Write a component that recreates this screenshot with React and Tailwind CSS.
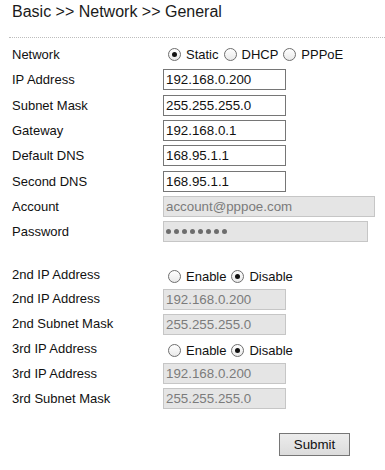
import React from "react";

function Radio({ checked }) {
    return (
        <span className="inline-flex h-[13px] w-[13px] shrink-0 items-center justify-center rounded-full border border-[#6e6e6e] bg-linear-to-b from-white to-[#e9e9e9]">
            {checked && <span className="h-[5px] w-[5px] rounded-full bg-[#111]" />}
        </span>
    );
}

function Choice({ label, checked }) {
    return (
        <label className="flex items-center">
            <span className="ml-[5px] mr-[5px] flex"><Radio checked={checked} /></span>
            <span>{label}</span>
        </label>
    );
}

function Row({ label, children, h }) {
    return (
        <div className={"flex items-center " + h}>
            <div className="w-[151px] shrink-0">{label}</div>
            <div className="flex items-center">{children}</div>
        </div>
    );
}

function Field({ value, w = "w-[123px]", off }) {
    return (
        <input
            readOnly
            defaultValue={value}
            className={
                "h-[21px] border px-[2px] text-[13.33px] outline-none " +
                w +
                (off
                    ? " border-[#c6c6c6] bg-[#e5e5e5] text-[#7b7b7b]"
                    : " border-[#767676] bg-white text-[#111]")
            }
        />
    );
}

const mainRows = [
    ["IP Address", "192.168.0.200"],
    ["Subnet Mask", "255.255.255.0"],
    ["Gateway", "192.168.0.1"],
    ["Default DNS", "168.95.1.1"],
    ["Second DNS", "168.95.1.1"],
];

function App() {
    const h1 = "h-[25.33px]";
    const h2 = "h-[24.8px]";
    return (
        <div className="min-h-[470px] w-[385px] bg-white font-['Liberation_Sans',Arial,sans-serif] text-[13px] text-[#111]">
            <div className="pl-[12px] pt-[3px] text-[16px] leading-[18px] text-[#1a1a1a]">Basic &gt;&gt; Network &gt;&gt; General</div>
            <div className="ml-[9px] mt-[16px] border-t border-dotted border-[#bdbdbd]" />

            <div className="pl-[12px] pt-[4px]">
                <Row label="Network" h={h1}>
                    <Choice label="Static" checked />
                    <Choice label="DHCP" />
                    <Choice label="PPPoE" />
                </Row>
                {mainRows.map(([label, value]) => (
                    <Row key={label} label={label} h={h1}>
                        <Field value={value} />
                    </Row>
                ))}
                <Row label="Account" h={h1}>
                    <Field value="account@pppoe.com" w="w-[212px]" off />
                </Row>
                <Row label="Password" h={h1}>
                    <div className="flex h-[21px] w-[205px] items-center gap-[3px] border border-[#c6c6c6] bg-[#e5e5e5] pl-[2px]">
                        {[0, 1, 2, 3, 4, 5, 6, 7].map((i) => (
                            <span key={i} className="h-[5px] w-[5px] rounded-full bg-[#6d6d6d]" />
                        ))}
                    </div>
                </Row>

                <div className="mt-[17.4px]">
                    <Row label="2nd IP Address" h={h2}>
                        <div className="flex translate-y-[2px] items-center">
                            <Choice label="Enable" />
                            <Choice label="Disable" checked />
                        </div>
                    </Row>
                    <Row label="2nd IP Address" h={h2}>
                        <Field value="192.168.0.200" off />
                    </Row>
                    <Row label="2nd Subnet Mask" h={h2}>
                        <Field value="255.255.255.0" off />
                    </Row>
                    <Row label="3rd IP Address" h={h2}>
                        <div className="flex translate-y-[2px] items-center">
                            <Choice label="Enable" />
                            <Choice label="Disable" checked />
                        </div>
                    </Row>
                    <Row label="3rd IP Address" h={h2}>
                        <Field value="192.168.0.200" off />
                    </Row>
                    <Row label="3rd Subnet Mask" h={h2}>
                        <Field value="255.255.255.0" off />
                    </Row>
                </div>

                <button className="ml-[267px] mt-[22.4px] h-[23px] w-[71px] border border-[#767676] bg-linear-to-b from-[#ececec] to-[#dcdcdc] text-[13.33px] text-[#111]">
                    Submit
                </button>
            </div>
        </div>
    );
}

export default App;
